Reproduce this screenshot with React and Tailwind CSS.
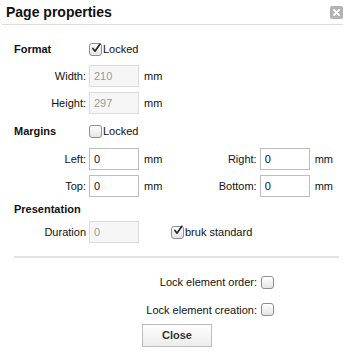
import React from 'react'

function Check({ checked }) {
    return (
        <span className="inline-flex h-[13px] w-[13px] shrink-0 items-center justify-center rounded-[3px] border border-[#8e8e8e] bg-gradient-to-b from-white to-[#e4e4e4] shadow-[inset_0_1px_0_#fff]">
            {checked && (
                <svg width="13" height="13" viewBox="0 0 13 13" className="-mt-[3px] ml-[1px]">
                    <path d="M2.5 6.5 L5.2 10 L11.5 1" fill="none" stroke="#2a2a2a" strokeWidth="2.2" strokeLinecap="round" strokeLinejoin="round" />
                </svg>
            )}
        </span>
    )
}

function Field({ label, value, disabled }) {
    return (
        <div className="flex items-center">
            <span className="w-[75px] pr-[3px] text-right text-[#111]">{label}</span>
            <input
                readOnly
                value={value}
                className={`h-[22px] w-[50px] border px-[4px] text-[11px] outline-none ${disabled ? 'border-[#dcdcdc] bg-[#f6f6f6] text-[#9a9a9a]' : 'border-[#bdbdbd] bg-white text-[#111]'}`}
            />
            <span className="ml-[5px]">mm</span>
        </div>
    )
}

export default function App() {
    return (
        <div className="h-[354px] w-[349px] bg-white text-[11px] text-[#111] font-['Liberation_Sans',Arial,sans-serif]">
            {/* Header */}
            <div className="mx-[2px] flex h-[25px] w-[341px] items-center justify-between border-b border-[#dcdcdc] pl-[4px]">
                <h1 className="text-[14px] font-bold leading-none text-[#111]">Page properties</h1>
                <span className="flex h-[13px] w-[13px] items-center justify-center rounded-[2px] bg-[#b3b3b3]">
                    <svg width="7" height="7" viewBox="0 0 7 7">
                        <path d="M1 1 L6 6 M6 1 L1 6" stroke="#fff" strokeWidth="1.8" strokeLinecap="round" />
                    </svg>
                </span>
            </div>

            <div className="pl-[14px] pr-[11px]">
                {/* Format */}
                <div className="mt-[18px] flex h-[13px] items-center">
                    <span className="w-[75px] font-bold">Format</span>
                    <Check checked />
                    <span className="ml-[1px]">Locked</span>
                </div>
                <div className="mt-[9px] flex flex-col gap-[5px]">
                    <Field label="Width:" value="210" disabled />
                    <Field label="Height:" value="297" disabled />
                </div>

                {/* Margins */}
                <div className="mt-[11px] flex h-[13px] items-center">
                    <span className="w-[75px] font-bold">Margins</span>
                    <Check />
                    <span className="ml-[1px]">Locked</span>
                </div>
                <div className="mt-[10px] flex flex-col gap-[5px]">
                    <div className="flex items-center">
                        <Field label="Left:" value="0" />
                        <div className="ml-auto mr-[5px]">
                            <Field label="Right:" value="0" />
                        </div>
                    </div>
                    <div className="flex items-center">
                        <Field label="Top:" value="0" />
                        <div className="ml-auto mr-[5px]">
                            <Field label="Bottom:" value="0" />
                        </div>
                    </div>
                </div>

                {/* Presentation */}
                <div className="mt-[6px] font-bold leading-[13px]">Presentation</div>
                <div className="mt-[5px] flex items-center">
                    <span className="w-[75px] pr-[3px] text-right text-[#111]">Duration</span>
                    <input
                        readOnly
                        value="0"
                        className="h-[22px] w-[50px] border border-[#dcdcdc] bg-[#f6f6f6] px-[4px] text-[11px] text-[#9a9a9a] outline-none"
                    />
                    <span className="ml-[32px] flex items-center">
                        <Check checked />
                        <span className="ml-[1px]">bruk standard</span>
                    </span>
                </div>

                <div className="mt-[13px] mr-[-1px] border-t-2 border-[#e3e3e3]" />

                {/* Locks */}
                <div className="mt-[16px] flex flex-col gap-[11px]">
                    <div className="flex items-center">
                        <span className="w-[247px] pr-[4px] text-right">Lock element order:</span>
                        <Check />
                    </div>
                    <div className="flex items-center">
                        <span className="w-[247px] pr-[4px] text-right">Lock element creation:</span>
                        <Check />
                    </div>
                </div>

                <div className="mt-[6px] flex">
                    <button className="ml-[128px] h-[23px] w-[70px] border border-[#bcbcbc] bg-gradient-to-b from-white to-[#ececec] text-[11px] font-bold text-[#333]">
                        Close
                    </button>
                </div>
            </div>
        </div>
    )
}
